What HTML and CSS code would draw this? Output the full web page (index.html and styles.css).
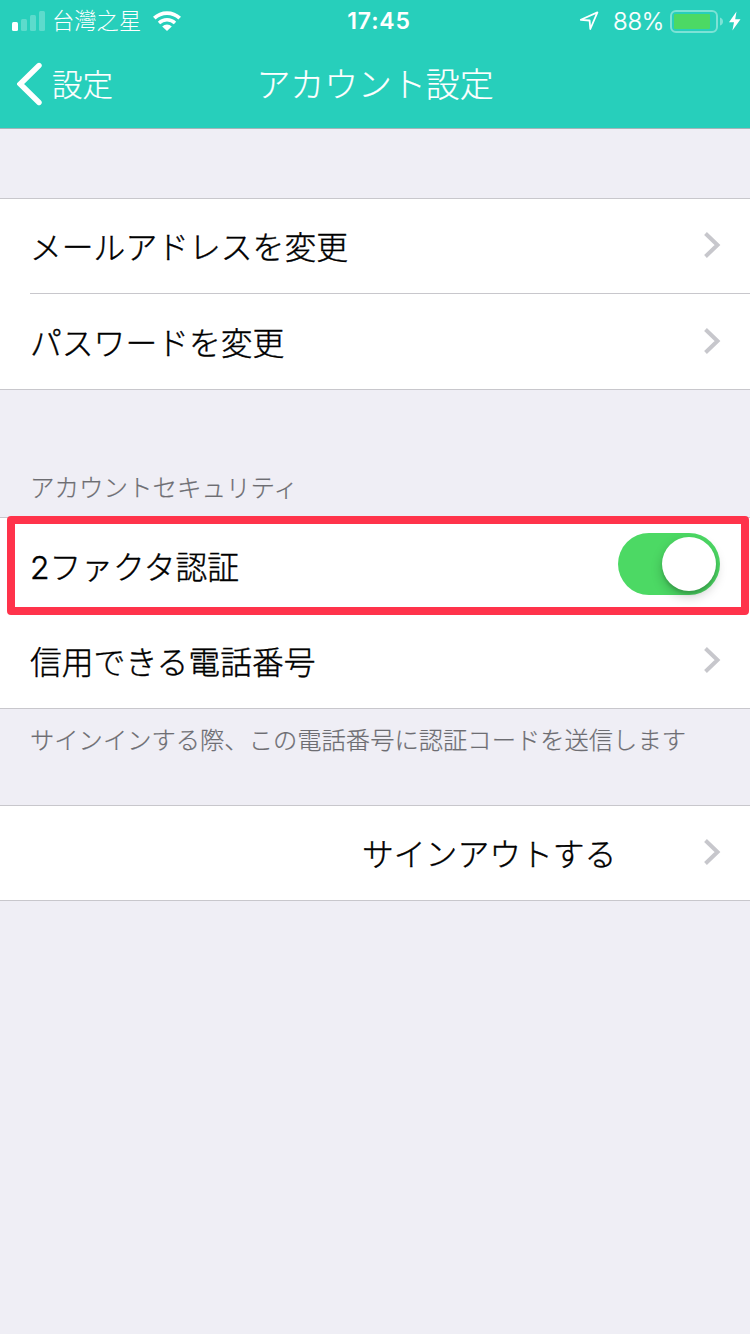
FILE: index.html
```html
<!DOCTYPE html>
<html lang="ja">
<head>
<meta charset="utf-8">
<title>アカウント設定</title>
<link rel="stylesheet" href="styles.css">
</head>
<body>
<svg width="0" height="0" class="defs">
  <symbol id="chevron" viewBox="0 0 18 28"><path d="M2.5 2.5 14.5 14 2.5 25.5" fill="none" stroke="#c7c7cc" stroke-width="4"/></symbol>
</svg>
<header class="header">
  <div class="status">
    <div class="status-left">
      <svg class="signal" width="34" height="21" viewBox="0 0 34 21" fill="#fff">
        <rect x="0" y="12" width="6" height="9" rx="1.5"/>
        <g opacity=".25"><rect x="9" y="9" width="6" height="12" rx="1.5"/><rect x="18" y="5" width="6" height="16" rx="1.5"/><rect x="27" y="1" width="6" height="20" rx="1.5"/></g>
      </svg>
      <span class="carrier" lang="zh-TW">台灣之星</span>
      <svg class="wifi" width="28" height="20" viewBox="0 0 28 20" fill="none" stroke="#fff">
        <path d="M1.3 7.2a18.2 18.2 0 0 1 25.4 0" stroke-width="3.7"/>
        <path d="M6 12a11.6 11.6 0 0 1 16 0" stroke-width="3.4"/>
        <path d="M9.2 15.5a7 7 0 0 1 9.6 0L14 20z" fill="#fff" stroke="none"/>
      </svg>
    </div>
    <span class="time">17:45</span>
    <div class="status-right">
      <svg width="20" height="20" viewBox="0 0 20 20"><path d="M1.8 8.8 18.4 1.4 11.3 18 10.6 9.5z" fill="none" stroke="#fff" stroke-width="1.8" stroke-linejoin="round"/></svg>
      <span class="percent">88%</span>
      <svg class="battery" width="54" height="24" viewBox="0 0 54 24">
        <rect x="1" y="1" width="46" height="21" rx="5" fill="none" stroke="#fff" stroke-opacity=".4" stroke-width="2"/>
        <rect x="4" y="4" width="36" height="15" rx="1" fill="#4cd964"/>
        <path d="M50 7.5q3 1 3 4t-3 4z" fill="#fff" fill-opacity=".4"/>
      </svg>
      <svg class="bolt" width="12" height="20" viewBox="0 0 12 20"><path d="M7.5.5 0 11.2h5L3.4 19.5 11.5 8.2H6.2z" fill="#fff"/></svg>
    </div>
  </div>
  <nav class="nav">
    <a class="back">
      <svg width="26" height="44" viewBox="0 0 26 44"><path d="M22 3.5 3.2 22 22 40.5" fill="none" stroke="#fff" stroke-width="5.4" stroke-linecap="round" stroke-linejoin="miter"/></svg>
      <span class="back-text">設定</span>
    </a>
    <h1 class="title">アカウント設定</h1>
  </nav>
</header>
<main class="main">
  <section class="group">
    <div class="row row-first"><span class="label">メールアドレスを変更</span><svg class="chevron"><use href="#chevron"/></svg></div>
    <div class="divider"></div>
    <div class="row"><span class="label">パスワードを変更</span><svg class="chevron"><use href="#chevron"/></svg></div>
  </section>
  <h2 class="caption">アカウントセキュリティ</h2>
  <section class="group">
    <div class="row row-highlight"><span class="label">2ファクタ認証</span><span class="toggle"><span class="knob"></span></span></div>
    <div class="row"><span class="label">信用できる電話番号</span><svg class="chevron"><use href="#chevron"/></svg></div>
  </section>
  <p class="note">サインインする際、この電話番号に認証コードを送信します</p>
  <section class="group">
    <div class="row row-signout"><span class="label">サインアウトする</span><svg class="chevron"><use href="#chevron"/></svg></div>
  </section>
</main>
</body>
</html>
```
FILE: styles.css
```css
* { box-sizing: border-box; }
body {
  margin: 0;
  min-height: 1334px;
  background: #efeef5;
  color: #000;
  font-family: Inter, "Noto Sans CJK JP", sans-serif;
}
.defs { position: absolute; }
svg { display: block; flex: none; }
.header {
  height: 129px;
  background: #27cfbb;
  border-bottom: 1px solid #a3b5ba;
  color: #fff;
}
.status {
  display: grid;
  grid-template-columns: 1fr auto 1fr;
  height: 40px;
  align-items: center;
  padding: 0 9px 0 12px;
}
.status-left, .status-right { display: flex; align-items: center; height: 40px; }
.status-right { justify-content: flex-end; }
.signal { margin-bottom: 1px; }
.carrier {
  margin: 0 0 3px 6px;
  font: 300 22.3px/37px "Noto Sans CJK TC", sans-serif;
}
.wifi { margin: 0 0 1px 12px; }
.time { font-size: 23px; font-weight: 600; letter-spacing: 0.8px; line-height: 42px; padding-left: 5px; }
.percent { font-size: 24px; font-weight: 300; line-height: 40px; margin: 1px 6px 0 14px; letter-spacing: -0.3px; -webkit-text-stroke: 0.2px; }
.battery { margin-top: 2px; }
.bolt { margin-left: 5px; }
.nav {
  display: grid;
  grid-template-columns: 1fr auto 1fr;
  height: 88px;
  align-items: center;
  padding: 0 16px;
}
.back { display: flex; align-items: center; gap: 9px; padding-left: 1px; font-size: 30.5px; font-weight: 300; line-height: 86px; }
.back-text { padding-top: 2px; }
.title { margin: 0; padding-top: 2px; font-size: 33.9px; font-weight: 300; line-height: 86px; }
.back-text, .title { -webkit-text-stroke: 0.2px; }
.main { padding-top: 69px; }
.group { background: #fff; border: solid #c8c7cc; border-width: 1px 0; }
.row {
  position: relative;
  display: flex;
  align-items: center;
  justify-content: space-between;
  height: 95px;
  padding: 0 29px 0 30px;
}
.row-first, .row-signout { height: 94px; }
.divider { height: 1px; margin-left: 30px; background: #c8c7cc; }
.label { font-size: 31.8px; font-weight: 300; line-height: 90px; padding-top: 4px; -webkit-text-stroke: 0.4px; }
.chevron { width: 18px; height: 28px; margin-bottom: 2px; }
.caption {
  margin: 0;
  height: 127px;
  padding: 80px 30px 0;
  font-size: 24.5px;
  font-weight: 300;
  line-height: 36px;
  color: #6d6d72;
}
.note {
  margin: 0;
  height: 96px;
  padding: 13px 30px 0;
  font-size: 24.3px;
  font-weight: 300;
  line-height: 36px;
  white-space: nowrap;
  color: #6d6d72;
}
.caption, .note { -webkit-text-stroke: 0.2px; }
.row-highlight { padding-right: 30px; }
.row-highlight::after {
  content: "";
  position: absolute;
  inset: -2px 1px -2px 7px;
  border: 8px solid #ff334b;
  border-radius: 4px;
}
.toggle {
  display: flex;
  justify-content: flex-end;
  width: 102px;
  height: 62px;
  margin-bottom: 3px;
  padding: 4px;
  border-radius: 31px;
  background: #4cd964;
}
.knob {
  width: 54px;
  height: 54px;
  border-radius: 50%;
  background: #fff;
  box-shadow: 0 5px 12px rgba(0, 0, 0, .22), 0 3px 3px rgba(0, 0, 0, .12);
}
.row-signout { padding-left: 362px; }
```
